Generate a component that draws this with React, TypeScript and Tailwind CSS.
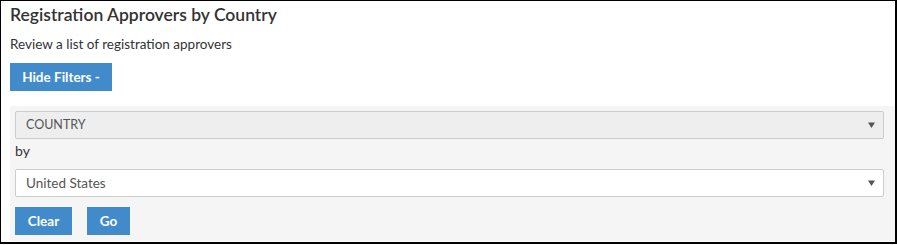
const font = { fontFamily: '"Lato", "Liberation Sans", sans-serif' };

const Arrow = () => (
  <svg width="7" height="6" viewBox="0 0 7 6" className="shrink-0">
    <path d="M0 0.5h7L3.5 6z" fill="#555" />
  </svg>
);

const SelectBox = ({ label, muted }: { label: string; muted?: boolean }) => (
  <div
    className={`flex h-[28px] items-center justify-between rounded-[2px] border border-[#cccccc] pl-[10px] pr-[8px] text-[#555] ${
      muted ? "bg-[#eeeeee] text-[12.5px]" : "bg-white text-[13.5px]"
    }`}
  >
    <span>{label}</span>
    <Arrow />
  </div>
);

export default function App() {
  return (
    <div
      className="h-[244px] w-[897px] border-l border-t border-b-2 border-r-2 border-black bg-white text-[#333]"
      style={font}
    >
      <div className="pl-[9px] pt-[2px]">
        <h1 className="text-[17.5px] font-semibold leading-[24px] text-[#333]">
          Registration Approvers by Country
        </h1>
        <p className="mt-[8px] text-[13.5px] leading-[18px]">Review a list of registration approvers</p>
        <button className="mt-[10px] h-[28px] w-[102px] bg-[#428bca] text-[13.5px] font-bold text-white">
          Hide Filters -
        </button>
      </div>
      <div className="ml-[9px] mt-[15px] h-[135px] bg-[#f5f5f5] pl-[5px] pr-[11px] pt-[5px]">
        <SelectBox label="COUNTRY" muted />
        <div className="h-[30px] pt-[2px] text-[14px] leading-[20px]">by</div>
        <SelectBox label="United States" />
        <div className="mt-[10px] flex gap-[15px]">
          <button className="h-[28px] w-[57px] bg-[#428bca] text-[13.5px] font-bold text-white">Clear</button>
          <button className="h-[28px] w-[43px] bg-[#428bca] text-[13.5px] font-bold text-white">Go</button>
        </div>
      </div>
    </div>
  );
}
